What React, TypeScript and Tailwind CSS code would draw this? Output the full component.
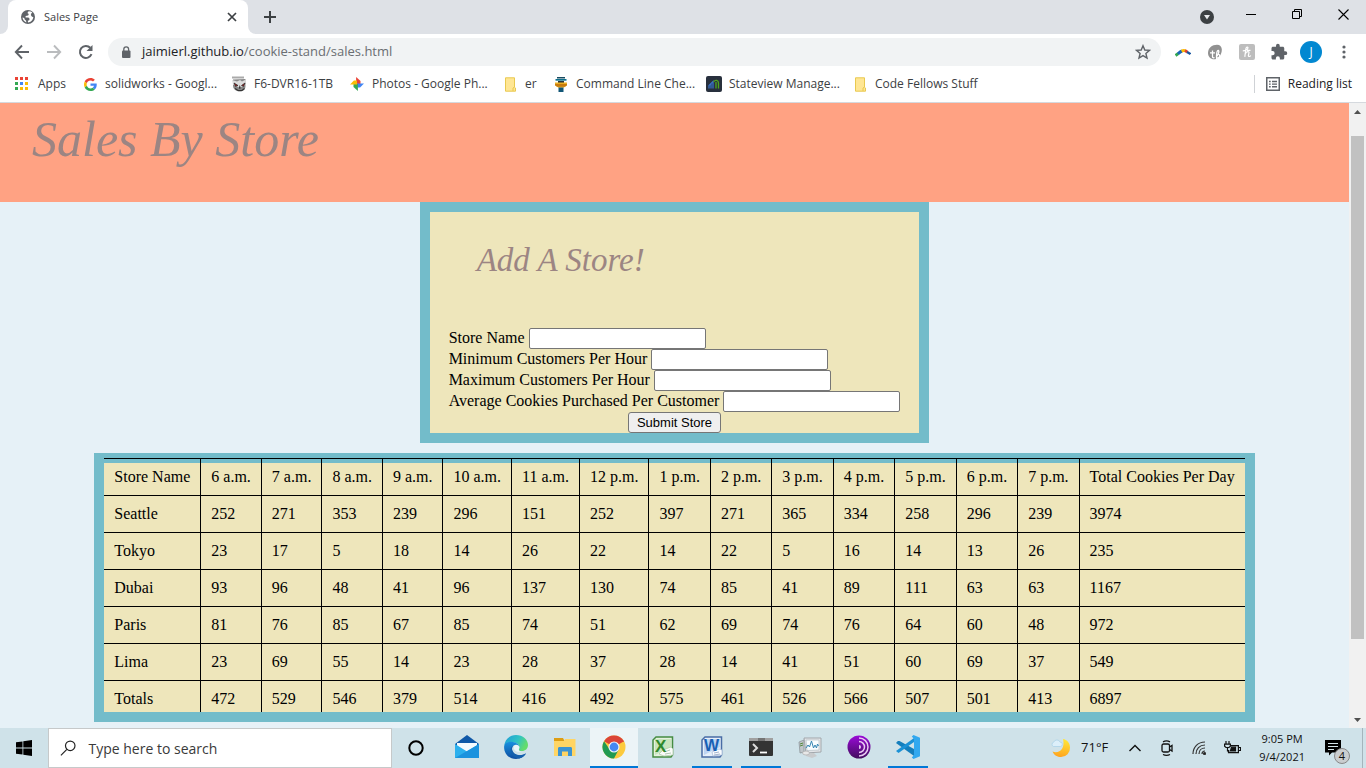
import React from "react";

const HOURS = ["6 a.m.", "7 a.m.", "8 a.m.", "9 a.m.", "10 a.m.", "11 a.m.", "12 p.m.", "1 p.m.", "2 p.m.", "3 p.m.", "4 p.m.", "5 p.m.", "6 p.m.", "7 p.m."];

const STORES: { name: string; sales: number[]; total: number }[] = [
  { name: "Seattle", sales: [252, 271, 353, 239, 296, 151, 252, 397, 271, 365, 334, 258, 296, 239], total: 3974 },
  { name: "Tokyo", sales: [23, 17, 5, 18, 14, 26, 22, 14, 22, 5, 16, 14, 13, 26], total: 235 },
  { name: "Dubai", sales: [93, 96, 48, 41, 96, 137, 130, 74, 85, 41, 89, 111, 63, 63], total: 1167 },
  { name: "Paris", sales: [81, 76, 85, 67, 85, 74, 51, 62, 69, 74, 76, 64, 60, 48], total: 972 },
  { name: "Lima", sales: [23, 69, 55, 14, 23, 28, 37, 28, 14, 41, 51, 60, 69, 37], total: 549 },
];

const TOTALS = { name: "Totals", sales: [472, 529, 546, 379, 514, 416, 492, 575, 461, 526, 566, 507, 501, 413], total: 6897 };

const FIELDS = [
  { id: "store-name", label: "Store Name" },
  { id: "min-customers", label: "Minimum Customers Per Hour" },
  { id: "max-customers", label: "Maximum Customers Per Hour" },
  { id: "avg-cookies", label: "Average Cookies Purchased Per Customer" },
];

/* ---------- Browser icons ---------- */

const GlobeIcon = () => (
  <svg width="16" height="16" viewBox="0 0 16 16">
    <circle cx="8" cy="8" r="7" fill="#5f6368" />
    <path d="M8.6 2.2 7.4 4l1.4 1-.6 1.6-2.6.4v1.4h2.8l1.2 1.4-.3 1.4-1.5.6.2 1.8c2.800-.4 5.200-2.800 5.300-5.600l-1.300-.2-1.200-1.800.6-1.800 1-.6A5.600 5.600 0 0 0 8.600 2.200zM2.500 8.600c.2 2.200 1.700 4.100 3.800 4.900l-.2-1.800-1.600-1.500-.2-1.200z" fill="#fff" />
  </svg>
);

const CloseIcon = () => (
  <svg width="10" height="10" viewBox="0 0 10 10" stroke="#3c4043" strokeWidth="1.7">
    <path d="M1 1l8 8M9 1l-8 8" />
  </svg>
);

const PlusIcon = () => (
  <svg width="12" height="12" viewBox="0 0 12 12" stroke="#3c4043" strokeWidth="2">
    <path d="M6 0v12M0 6h12" />
  </svg>
);

const TabSearchIcon = () => (
  <svg width="14" height="14" viewBox="0 0 14 14">
    <circle cx="7" cy="7" r="7" fill="#3c4043" />
    <path d="M4 5h6l-3 4.500z" fill="#e8eaed" />
  </svg>
);

const MinimizeIcon = () => (
  <svg width="10" height="10" viewBox="0 0 10 10">
    <path d="M0 5.500h10" stroke="#000" />
  </svg>
);

const RestoreIcon = () => (
  <svg width="10" height="10" viewBox="0 0 10 10" fill="none" stroke="#000">
    <path d="M.5 2.500h7v7h-7zM2.500 2.500v-2h7v7h-2" />
  </svg>
);

const WindowCloseIcon = () => (
  <svg width="11" height="11" viewBox="0 0 11 11" stroke="#000" strokeWidth="1.100">
    <path d="M.5.5l10 10M10.500.5l-10 10" />
  </svg>
);

const ArrowIcon = ({ color, forward }: { color: string; forward?: boolean }) => (
  <svg width="16" height="16" viewBox="0 0 16 16" fill="none" stroke={color} strokeWidth="1.900">
    {forward ? <path d="M1 8h13M8 1.500 14.200 8 8 14.500" /> : <path d="M15 8H2M8 1.500 1.800 8 8 14.500" />}
  </svg>
);

const ReloadIcon = () => (
  <svg width="16" height="16" viewBox="0 0 16 16">
    <path d="M13.500 10.200A6 6 0 1 1 12.300 3.800" fill="none" stroke="#5f6368" strokeWidth="2" />
    <path d="M14.500 1v6h-6z" fill="#5f6368" />
  </svg>
);

const LockIcon = () => (
  <svg width="10" height="13" viewBox="0 0 10 13">
    <rect x="1" y="4.500" width="8.500" height="7.500" rx="1" fill="#5f6368" />
    <path d="M2.800 5V3.200a2.400 2.400 0 0 1 4.800 0V5" fill="none" stroke="#5f6368" strokeWidth="1.300" />
  </svg>
);

const StarIcon = () => (
  <svg width="16" height="16" viewBox="0 0 16 16" fill="none" stroke="#5f6368" strokeWidth="1.400">
    <path d="M8 1.700l1.800 4.300 4.700.4-3.600 3.100 1.100 4.600L8 11.600l-4 2.500 1.100-4.600L1.500 6.400l4.700-.4z" />
  </svg>
);

const ArcIcon = () => (
  <svg width="16" height="16" viewBox="0 0 16 16" fill="none" strokeWidth="3">
    <path d="M.5 11.500l2.800-2" stroke="#34a853" />
    <path d="M3 9.800C4.500 8.500 5.500 7.600 7 7" stroke="#1a66b8" />
    <path d="M6.600 7.100c1.600-.7 2.800-.7 3.800-.2" stroke="#fbbc05" />
    <path d="M10 6.500c1 .5 1.700 1 2.400 1.800" stroke="#e0402f" />
    <path d="M12 8l3.500 2" stroke="#1a56a0" strokeWidth="2.400" />
  </svg>
);

const LeafIcon = () => (
  <svg width="16" height="16" viewBox="0 0 16 16">
    <path d="M1 9C1 4 5 .8 10 .8c3 0 4.600 1.800 4.800 4.500.2 4-2 8.800-6.500 9.900C4 15.800 1 13 1 9z" fill="#919191" />
    <path d="M5.500 6.500v6c0 1.300 1 1.600 2 1M3 8.800h5M9.600 12.500c2-2.500 3-6 1.600-6-1.500 0-2 5-1.600 9M10 11c2.500-1.500 3.200.5 2.300 2-.5 1-1.500 1-2.100.6" fill="none" stroke="#fff" strokeWidth="1.300" />
  </svg>
);

const HoneyIcon = () => (
  <svg width="16" height="16" viewBox="0 0 16 16">
    <rect width="16" height="16" rx="2" fill="#bdbdbd" />
    <path d="M3.800 6.800C6 6.800 9 5.500 9 3.800 9 2.600 7.200 2.800 6.900 4.500L5.800 12.800M6.300 9.800C7.500 7.200 10.600 6.800 9.900 9L9.400 11.300C9.200 12.800 10.800 12.900 11.800 11.500M8 6.300h3.500" fill="none" stroke="#fff" strokeWidth="1.200" />
  </svg>
);

const PuzzleIcon = () => (
  <svg width="18" height="18" viewBox="0 0 24 24" fill="#5f6368">
    <path d="M20.500 11H19V7c0-1.100-.9-2-2-2h-4V3.500a2.500 2.500 0 0 0-5 0V5H4c-1.100 0-2 .9-2 2v3.800h1.500a2.700 2.700 0 0 1 0 5.400H2V20c0 1.100.9 2 2 2h3.800v-1.500a2.700 2.700 0 0 1 5.400 0V22H17c1.100 0 2-.9 2-2v-4h1.500a2.500 2.500 0 0 0 0-5z" />
  </svg>
);

const DotsIcon = () => (
  <svg width="4" height="14" viewBox="0 0 4 14" fill="#5f6368">
    <circle cx="2" cy="2" r="1.600" /><circle cx="2" cy="7" r="1.600" /><circle cx="2" cy="12" r="1.600" />
  </svg>
);

const AppsIcon = () => {
  const colors = ["#ea4335", "#ea4335", "#ea4335", "#34a853", "#4285f4", "#fbbc05", "#34a853", "#fbbc05", "#fbbc05"];
  return (
    <svg width="16" height="16" viewBox="0 0 16 16">
      {colors.map((c, i) => <rect key={i} x={(i % 3) * 5} y={1 + Math.floor(i / 3) * 5} width="3" height="3" fill={c} />)}
    </svg>
  );
};

const GoogleIcon = () => (
  <svg width="13" height="13" viewBox="0 0 48 48">
    <path fill="#EA4335" d="M24 9.500c3.540 0 6.710 1.220 9.210 3.600l6.850-6.850C35.900 2.380 30.470 0 24 0 14.620 0 6.510 5.380 2.560 13.220l7.980 6.190C12.430 13.720 17.740 9.500 24 9.500z" />
    <path fill="#4285F4" d="M46.980 24.550c0-1.570-.15-3.090-.38-4.550H24v9.020h12.940c-.58 2.960-2.260 5.480-4.780 7.180l7.730 6c4.510-4.180 7.090-10.360 7.090-17.650z" />
    <path fill="#FBBC05" d="M10.530 28.590A14.500 14.500 0 0 1 9.770 24c0-1.600.27-3.140.76-4.590l-7.980-6.190A23.900 23.900 0 0 0 0 24c0 3.880.92 7.540 2.560 10.780z" />
    <path fill="#34A853" d="M24 48c6.480 0 11.930-2.130 15.890-5.810l-7.730-6c-2.150 1.450-4.920 2.300-8.160 2.300-6.260 0-11.570-4.220-13.470-9.910l-7.980 6.190C6.510 42.620 14.620 48 24 48z" />
  </svg>
);

const OwlIcon = () => (
  <svg width="16" height="16" viewBox="0 0 16 16">
    <path d="M1 .5h12v2H1z" fill="#aaa" />
    <path d="M2 3.500 14.500 3v7c0 3-2 5.500-5.500 5.500-4 0-7-2.500-7-6z" fill="#888" />
    <path d="M1 4l5 1.500L9 4l2 1.500 4-2-1 6-3 1-2 1.500-3-1.500-4-2z" fill="#ddd" />
    <path d="M3 7l4 2.500-2.500.8zM14 7l-3.500 2.500 2.200.8z" fill="#a81c1c" stroke="#222" strokeWidth=".7" />
    <path d="M8.800 9l1 3-1 1-1-1z" fill="#333" />
    <path d="M4 12.500l3 2h4l2.500-2" fill="none" stroke="#333" strokeWidth="1.200" />
  </svg>
);

const PhotosIcon = () => (
  <svg width="14" height="14" viewBox="0 0 16 16">
    <path d="M7 0l5 4.500V8H7z" fill="#ea4335" />
    <path d="M16 7.500 11.500 12H8V7.500z" fill="#4285f4" />
    <path d="M9 16 4 11.500V8h5z" fill="#34a853" />
    <path d="M0 8.500 4.500 4H8v4.500z" fill="#fbbc05" />
  </svg>
);

const FolderIcon = () => (
  <svg width="13" height="15" viewBox="0 0 13 15">
    <path d="M1.500.8h9v9.400l1 .8v3.200H1.500z" fill="#ffe694" stroke="#e9c94f" />
    <path d="M9 14v-3l1.500-1" fill="none" stroke="#e9c94f" />
  </svg>
);

const TowerIcon = () => (
  <svg width="14" height="17" viewBox="0 0 14 17">
    <path d="M3 1h8v1.500H3z" fill="#184b60" /><path d="M1.500 3h11v1.700h-11z" fill="#0e718d" />
    <path d="M4 5h6v2H4z" fill="#25343b" /><path d="M1 6.500h12v2.800l-3.500 2.500h-5L1 9.300z" fill="#edaf21" />
    <path d="M1 8h12v1.300l-2 1.400H3L1 9.300z" fill="#c77c10" /><path d="M4.500 11.500h5V16h-5z" fill="#125777" />
  </svg>
);

const StateviewIcon = () => (
  <svg width="16" height="18" viewBox="0 0 16 18">
    <rect y="1" width="16" height="16" rx="2" fill="#28303d" />
    <path d="M3 13.500v-3l4-4v7M5 9v4.500" fill="none" stroke="#3970c4" strokeWidth="1.300" />
    <path d="M7.500 7c2-3 5-1.600 5 1v5.500M10 7v6.500" fill="none" stroke="#4fa51d" strokeWidth="1.300" />
  </svg>
);

const ReadingListIcon = () => (
  <svg width="14" height="14" viewBox="0 0 14 14" fill="none" stroke="#5f6368">
    <rect x=".75" y=".75" width="12.500" height="12.500" strokeWidth="1.500" />
    <path d="M3 4.500h1.700M3 7.100h1.700M3 9.700h1.700M6 4.500h5M6 7.100h5M6 9.700h5" strokeWidth="1.400" />
  </svg>
);

/* ---------- Taskbar icons ---------- */

const WindowsIcon = () => (
  <svg width="16" height="16" viewBox="0 0 16 16">
    <path d="M0 2.300 6.500 1.400v6.200H0zM7.300 1.300 16 0v7.600H7.300zM0 8.400h6.500v6.200L0 13.700zM7.300 8.400H16V16l-8.700-1.300z" />
  </svg>
);

const SearchIcon = () => (
  <svg width="18" height="18" viewBox="0 0 18 18" fill="none" stroke="#222" strokeWidth="1.300">
    <circle cx="11.200" cy="6.600" r="5.200" /><path d="M7.500 10.500 1 17" />
  </svg>
);

const CortanaIcon = () => (
  <svg width="16" height="16" viewBox="0 0 16 16"><circle cx="8" cy="8" r="6.700" fill="none" stroke="#000" strokeWidth="2" /></svg>
);

const MailIcon = () => (
  <svg width="24" height="24" viewBox="0 0 24 24">
    <path d="M0 9 12 0l12 9v3H0z" fill="#0f58a8" /><path d="M2 8h20v5l-10 6-10-6z" fill="#f5fafe" />
    <path d="M0 9l12 7.500L24 9v14H0z" fill="#2cb0ed" /><path d="M0 23 24 9v14z" fill="#1b93de" />
  </svg>
);

const EdgeIcon = () => (
  <svg width="24" height="24" viewBox="0 0 24 24">
    <defs>
      <linearGradient id="edge-a" x1="0" y1="0" x2="1" y2="0.400"><stop offset="0" stopColor="#1f9bd8" /><stop offset="0.600" stopColor="#2fc3c5" /><stop offset="1" stopColor="#64dc6c" /></linearGradient>
      <linearGradient id="edge-b" x1="0" y1="0" x2="0" y2="1"><stop offset="0" stopColor="#1890df" /><stop offset="1" stopColor="#0f4d9f" /></linearGradient>
    </defs>
    <path d="M.2 11C.8 4.500 5.700 0 12 0c7 0 12 4.800 12 10 0 3.700-2.800 6-6 6-2.400 0-3.600-.8-3.300-1.600.6-.9 1-1.800.6-3C14.500 8.500 11 7 7.500 7 4.300 7 1.500 8.500.2 11z" fill="url(#edge-a)" />
    <path d="M.1 12C.2 8.600 3.500 6.500 7.500 6.800c4 .2 7 2 7.500 4.600-.8-1-2-1.700-3.400-1.600-2.300.2-3.800 2.200-3.600 4.600.3 3.500 3.500 6 8 5.800 2.200 0 4-.7 6-1.900C20 21.800 16.500 24 12 24 5 24 0 18.500.1 12z" fill="url(#edge-b)" />
    <path d="M9.500 10.500c-3.800 1.800-3.800 6.800-1 9.800 1.600 1.800 4.200 3 6.800 3.200 2.900-.7 5.300-2.500 6.700-5-6 3.500-12.500 1.200-13.800-3.400-.4-1.800.1-3.500 1.300-4.600z" fill="#1560ad" />
    <path d="M11 10.200c2.400-1 5 1 4.200 3.300-.8 1.600-.5 2.500 1.800 3.100-3.300.9-6.700-.8-7.200-3.200-.2-1.400.2-2.500 1.200-3.200z" fill="#e9f6fa" />
  </svg>
);

const ExplorerIcon = () => (
  <svg width="22" height="20" viewBox="0 0 22 20">
    <path d="M0 1h9l1.500 3H0z" fill="#dd9d13" /><path d="M0 4h10l1-2h10.500v17H0z" fill="#ffd564" />
    <path d="M4 19v-7.500C4 10.700 4.500 10 5.500 10h11c1 0 1.500.7 1.500 1.500V19h-4v-4.500H8V19z" fill="#3c94d2" />
  </svg>
);

const ChromeIcon = () => (
  <svg width="24" height="24" viewBox="0 0 24 24">
    <circle cx="12" cy="12" r="11.500" fill="#fcca3e" />
    <path d="M12 12 2.040 6.250A11.500 11.500 0 0 1 21.960 6.250z" fill="#db4437" />
    <path d="M12 6.700h10.200a11.500 11.500 0 0 0-.24-.45H12z" fill="#db4437" />
    <path d="M2.040 6.250A11.500 11.500 0 0 0 12 23.500l4.600-8.800L12 12l-5 1.500z" fill="#219a52" />
    <circle cx="12" cy="12" r="5.500" fill="#f1f6f8" /><circle cx="12" cy="12" r="4.400" fill="#4688f1" />
  </svg>
);

const ExcelIcon = () => (
  <svg width="22" height="22" viewBox="0 0 22 22">
    <path d="M4 1h16.500v18L19 21H1V4z" fill="#e5f2df" stroke="#458c42" strokeWidth="1.500" />
    <path d="M3 3h16v8L3 19z" fill="#c8e5bd" />
    <path d="M11 14l8-3 2 2v6l-9 1-5-2z" fill="#fafcf9" stroke="#a8c4a2" strokeWidth=".7" /><path d="M12 16l6-2M13 18l6-1" stroke="#91af91" strokeWidth=".7" />
    <text x="3" y="16" fontFamily="Liberation Sans, sans-serif" fontWeight="700" fontSize="17" fill="#2f892d">X</text>
  </svg>
);

const WordIcon = () => (
  <svg width="22" height="22" viewBox="0 0 22 22">
    <path d="M4 1h16.500v18L19 21H1V4z" fill="#e6effa" stroke="#496ca5" strokeWidth="1.500" />
    <path d="M3 3h16v8L3 19z" fill="#bdd4f2" />
    <path d="M11 16l7-3 3 1v5l-9 1z" fill="#fafcff" stroke="#a5b9d8" strokeWidth=".7" /><path d="M13 17l5-1M13 19l6-1" stroke="#8197b9" strokeWidth=".7" />
    <text x="3" y="15" fontFamily="Liberation Sans, sans-serif" fontWeight="700" fontSize="16" fill="#175fb4">W</text>
  </svg>
);

const TerminalIcon = () => (
  <svg width="24" height="18" viewBox="0 0 24 18">
    <rect width="24" height="18" rx="1" fill="#343434" /><path d="M0 0h24v3H0z" fill="#a0a0a0" /><path d="M9 0h7v3H9z" fill="#757575" />
    <path d="M4 6l4 4-4 4" fill="none" stroke="#ddd" strokeWidth="2" /><path d="M11 14.500h7" stroke="#fff" strokeWidth="1.800" />
  </svg>
);

const MonitorIcon = () => (
  <svg width="24" height="22" viewBox="0 0 24 22">
    <path d="M1 6l5-2v12l-4 1z" fill="#c0c6ca" stroke="#868e92" strokeWidth=".7" /><path d="M2 8l3-1M2 10l3-1" stroke="#55883c" />
    <path d="M6 2h17v14l-15 1z" fill="#e3e5e8" stroke="#a2a7ab" /><path d="M8 4h13v10l-12 .5z" fill="#fafdff" stroke="#b5bec4" strokeWidth=".7" />
    <path d="M8 12l2-3 1.500 2 2-6 2 7 1.500-3 1.500 3 1-4 1 2" fill="none" stroke="#3585b2" />
    <path d="M9 17h7l3 3-5 2-6-2z" fill="#c9cbcd" /><ellipse cx="8" cy="17" rx="3.500" ry="2" fill="#e8e8e8" stroke="#aaa" strokeWidth=".7" />
  </svg>
);

const TorIcon = () => (
  <svg width="24" height="24" viewBox="0 0 24 24">
    <defs><linearGradient id="tor" x1="0" y1="0" x2="0" y2="1"><stop offset="0" stopColor="#9a0bd8" /><stop offset="1" stopColor="#420c5d" /></linearGradient></defs>
    <circle cx="12" cy="12" r="11.500" fill="url(#tor)" />
    <path d="M12 3a9 9 0 0 1 0 18M12 6.500a5.500 5.500 0 0 1 0 11" fill="none" stroke="#e8c9f2" strokeWidth="1.500" /><path d="M12 10a2 2 0 0 1 0 4z" fill="#e8c9f2" />
  </svg>
);

const CodeIcon = () => (
  <svg width="24" height="24" viewBox="0 0 24 24">
    <path d="M2 6 18 19v-5L3.500 6 0 8z" fill="#147ebc" />
    <path d="M0 8l2.500-2L18 17v4z" fill="#147ebc" />
    <path d="M0 16l2.500 2L18 7V3z" fill="#1b91d6" />
    <path d="M17.500 0 24 2.800v18.400L17.500 24l-1.700-1.600L18 20V4l-2.200-2.400z" fill="#32a8ef" />
  </svg>
);

const MoonIcon = () => (
  <svg width="20" height="20" viewBox="0 0 20 20">
    <defs><linearGradient id="moon" x1="0.600" y1="0" x2="0.400" y2="1"><stop offset="0" stopColor="#ffe63a" /><stop offset="1" stopColor="#ffa31d" /></linearGradient></defs>
    <path d="M12 1c4 .6 7 4 7 8.500a9 9 0 0 1-9 9.500c-3.500 0-7-1.600-8.500-5.500C8 16 14.500 11 12 1z" fill="url(#moon)" />
    <path d="M2.500 8.500a2.300 2.300 0 0 1 .3-4.400 3.300 3.300 0 0 1 6.200 0 2.200 2.200 0 0 1 .3 4.400z" fill="#dceffa" stroke="#a6d0e7" strokeWidth=".7" />
  </svg>
);

const ChevronUpIcon = () => (
  <svg width="14" height="8" viewBox="0 0 14 8"><path d="M1.500 7 7 1.500 12.500 7" fill="none" stroke="#111" strokeWidth="1.400" /></svg>
);

const MeetIcon = () => (
  <svg width="14" height="16" viewBox="0 0 14 16" fill="none" stroke="#111" strokeWidth="1.300">
    <rect x="2" y="4" width="7.500" height="8" rx="1.500" /><path d="M9.500 7l2.500-1.500v5.500L9.500 9.500M3 1.800Q6.500 0 10 1.800M3 14.500q3.500 1.600 7 0" />
  </svg>
);

const WifiIcon = () => (
  <svg width="14" height="14" viewBox="0 0 14 14" fill="none" stroke="#333" strokeWidth="1.200">
    <path d="M1 13C1 6 6 1 13 1M4 13c0-5 3.500-9 9-9M7 13c0-3.500 2.500-6 6-6M10 13c0-2 1-3 3-3" /><circle cx="12.500" cy="12.500" r="1" fill="#111" />
  </svg>
);

const BatteryIcon = () => (
  <svg width="17" height="14" viewBox="0 0 17 14" fill="none" stroke="#111" strokeWidth="1.200">
    <path d="M7 4.600h7.400v7H4.500V9M14.800 6.500h1.700v3h-1.700" /><path d="M7.500 6.200h4v3.800h-5z" fill="#111" />
    <path d="M2 0v3M5 0v3M.6 3.200h5.800v2L5 6.500H2L.6 5.200zM3.500 6.500V10h2" />
  </svg>
);

const ActionCenterIcon = () => (
  <svg width="17" height="16" viewBox="0 0 17 16">
    <path d="M0 0h16v12.500H7L4 15.500v-3H0z" fill="#000" /><path d="M3 3.500h10M3 6.500h10M3 9.500h6" stroke="#d4e4e9" />
  </svg>
);

/* ---------- Browser chrome ---------- */

const BOOKMARKS: { label: string; icon: React.ReactNode; width: string }[] = [
  { label: "Apps", icon: <AppsIcon />, width: "w-[67px]" },
  { label: "solidworks - Googl...", icon: <GoogleIcon />, width: "w-[149px]" },
  { label: "F6-DVR16-1TB", icon: <OwlIcon />, width: "w-[118px]" },
  { label: "Photos - Google Ph...", icon: <PhotosIcon />, width: "w-[153px]" },
  { label: "er", icon: <FolderIcon />, width: "w-[51px]" },
  { label: "Command Line Che...", icon: <TowerIcon />, width: "w-[153px]" },
  { label: "Stateview Manage...", icon: <StateviewIcon />, width: "w-[146px]" },
  { label: "Code Fellows Stuff", icon: <FolderIcon />, width: "w-[130px]" },
];

function TabStrip() {
  return (
    <div className="flex h-[34px] items-stretch bg-[#dee1e6]">
      <div className="flex w-2 bg-white"><div className="w-2 rounded-br-lg bg-[#dee1e6]" /></div>
      <div className="flex w-60 items-center rounded-t-lg bg-white pl-3 pr-[11px]">
        <GlobeIcon />
        <span className="ml-2 flex-1 text-[11px] text-[#3c4043]">Sales Page</span>
        <button aria-label="Close tab"><CloseIcon /></button>
      </div>
      <div className="flex w-2 bg-white"><div className="w-2 rounded-bl-lg bg-[#dee1e6]" /></div>
      <button aria-label="New tab" className="px-2"><PlusIcon /></button>
      <div className="ml-auto flex items-center pr-[17px]">
        <button aria-label="Search tabs" className="mr-[32px]"><TabSearchIcon /></button>
        <div className="mb-[6px] flex items-center gap-9">
          <button aria-label="Minimize"><MinimizeIcon /></button>
          <button aria-label="Restore"><RestoreIcon /></button>
          <button aria-label="Close window"><WindowCloseIcon /></button>
        </div>
      </div>
    </div>
  );
}

function Toolbar() {
  return (
    <div className="flex h-9 items-center bg-white pl-[14px] pr-5">
      <div className="flex items-center gap-4">
        <button aria-label="Back"><ArrowIcon color="#5f6368" /></button>
        <button aria-label="Forward"><ArrowIcon color="#babcbe" forward /></button>
        <button aria-label="Reload"><ReloadIcon /></button>
      </div>
      <div className="ml-[14px] flex h-7 flex-1 items-center rounded-full bg-[#f1f3f4] pl-[13px] pr-[10px]">
        <LockIcon />
        <span className="ml-[11px] flex-1 text-[13px] text-[#6a6e72]"><span className="text-[#202124]">jaimierl.github.io</span>/cookie-stand/sales.html</span>
        <button aria-label="Bookmark this page"><StarIcon /></button>
      </div>
      <div className="ml-[14px] flex items-center gap-4">
        <button aria-label="Arc extension"><ArcIcon /></button>
        <button aria-label="Leaf extension"><LeafIcon /></button>
        <button aria-label="Coupons extension"><HoneyIcon /></button>
        <button aria-label="Extensions" className="-ml-px"><PuzzleIcon /></button>
      </div>
      <button className="ml-3 size-[22px] rounded-full bg-[#0288d1] text-xs text-white">J</button>
      <button aria-label="Menu" className="ml-5"><DotsIcon /></button>
    </div>
  );
}

function BookmarksBar() {
  return (
    <nav className="flex h-[33px] items-center border-b border-[#d5d9de] bg-white pb-1 pl-[15px] pr-[14px] text-[12px] text-[#3c4043]">
      {BOOKMARKS.map((b) => (
        <a key={b.label} href="#" className={`flex shrink-0 items-center gap-[7px] whitespace-nowrap ${b.width}`}>
          <span className="flex w-4 justify-center">{b.icon}</span>
          {b.label}
        </a>
      ))}
      <button className="ml-auto flex items-center gap-2 border-l border-[#cfd2d6] pl-[11px] text-[#202124]">
        <ReadingListIcon />
        Reading list
      </button>
    </nav>
  );
}

function Scrollbar() {
  return (
    <div className="flex w-[17px] shrink-0 flex-col bg-[#f1f1f1]">
      <svg width="17" height="17" viewBox="0 0 17 17"><path d="M5 11h7L8.500 7z" fill="#505050" /></svg>
      <div className="flex flex-1 flex-col items-center">
        <div className="grow-[16]" />
        <div className="w-[13px] grow-[503] bg-[#c1c1c1]" />
        <div className="grow-[72]" />
      </div>
      <svg width="17" height="17" viewBox="0 0 17 17"><path d="M5 7h7l-3.500 4z" fill="#505050" /></svg>
    </div>
  );
}

/* ---------- Page ---------- */

function StoreForm() {
  return (
    <form className="border-10 border-[#73bcca] bg-[#eee6bb] px-[19px] pt-6" onSubmit={(e) => e.preventDefault()}>
      <h2 className="mb-11 ml-7 font-['Liberation_Serif',serif] text-[33px] leading-[48px] italic text-[#9c8583]">Add A Store!</h2>
      {FIELDS.map((f) => (
        <div key={f.id} className="flex h-[21px] items-start gap-1">
          <label htmlFor={f.id} className="leading-5">{f.label}</label>
          <input id={f.id} type="text" className="h-[21px] w-[177px] rounded-xs border border-[#767676] bg-white px-1 text-[13px]" />
        </div>
      ))}
      <div className="flex justify-center">
        <button type="submit" className="h-[21px] rounded-[3px] border border-[#767676] bg-[#efefef] px-2 font-['Liberation_Sans',sans-serif] text-[13px] leading-[19px]">Submit Store</button>
      </div>
    </form>
  );
}

function SalesTable() {
  return (
    <div className="mt-[10px] border-x-10 border-t-5 border-b-10 border-[#73bcca] bg-[#eee6bb]">
      <table className="border-separate border-spacing-0 whitespace-nowrap text-left">
        <thead>
          <tr>
            {["Store Name", ...HOURS, "Total Cookies Per Day"].map((h) => (
              <th key={h} scope="col" className="border-t border-l border-black p-0 font-normal first:border-l-0">
                <div className="border-t-4 border-[#73bcca] px-[10px] pt-[5px] pb-[9px] leading-[18px]">{h}</div>
              </th>
            ))}
          </tr>
        </thead>
        <tbody>
          {STORES.map((s) => (
            <tr key={s.name}>
              {[s.name, ...s.sales, s.total].map((v, i) => (
                <td key={i} className="border-t border-l border-black px-[10px] py-[9px] leading-[18px] first:border-l-0">{v}</td>
              ))}
            </tr>
          ))}
        </tbody>
        <tfoot>
          <tr>
            {[TOTALS.name, ...TOTALS.sales, TOTALS.total].map((v, i) => (
              <td key={i} className="border-t border-l border-black px-[10px] pt-[9px] pb-1 leading-[18px] first:border-l-0">{v}</td>
            ))}
          </tr>
        </tfoot>
      </table>
    </div>
  );
}

/* ---------- Taskbar ---------- */

const TASKS: { name: string; icon: React.ReactNode; open?: boolean }[] = [
  { name: "Mail", icon: <MailIcon /> },
  { name: "Edge", icon: <EdgeIcon /> },
  { name: "File Explorer", icon: <ExplorerIcon /> },
  { name: "Chrome", icon: <ChromeIcon />, open: true },
  { name: "Excel", icon: <ExcelIcon /> },
  { name: "Word", icon: <WordIcon />, open: true },
  { name: "Terminal", icon: <TerminalIcon />, open: true },
  { name: "Resource Monitor", icon: <MonitorIcon /> },
  { name: "Tor Browser", icon: <TorIcon /> },
  { name: "VS Code", icon: <CodeIcon />, open: true },
];

function Taskbar() {
  return (
    <footer className="flex h-10 items-stretch bg-[#cfe2e9] text-[#111]">
      <button aria-label="Start" className="flex w-12 items-center justify-center"><WindowsIcon /></button>
      <label className="flex w-[344px] items-center gap-3 border border-[#c6c9ca] bg-white pl-[11px]">
        <SearchIcon />
        <input type="text" aria-label="Search" placeholder="Type here to search" className="w-full bg-transparent text-[14px] outline-none placeholder:text-[#3a3a3a]" />
      </label>
      <button aria-label="Cortana" className="flex w-[50px] items-center justify-center pr-[2px]"><CortanaIcon /></button>
      {TASKS.map((t) => (
        <button key={t.name} aria-label={t.name} className="flex w-[49px] justify-center">
          <span
            className={
              t.name === "Chrome"
                ? "flex h-10 w-12 items-center justify-center border-b-2 border-[#0078d7] bg-[#ecf4f7]"
                : t.open
                  ? "flex h-10 w-10 items-center justify-center border-b-2 border-[#0078d7]"
                  : "flex h-10 w-10 items-center justify-center border-b-2 border-transparent"
            }
          >
            {t.icon}
          </span>
        </button>
      ))}
      <div className="ml-auto flex items-center">
        <button className="flex items-center gap-[10px] text-[13px]"><MoonIcon />71°F</button>
        <div className="ml-5 flex items-center gap-[18px]">
          <button aria-label="Show hidden icons"><ChevronUpIcon /></button>
          <button aria-label="Meet now"><MeetIcon /></button>
          <button aria-label="Network"><WifiIcon /></button>
          <button aria-label="Battery"><BatteryIcon /></button>
        </div>
        <div className="ml-[18px] text-center text-[11px] leading-[18px]">
          <div>9:05 PM</div>
          <div>9/4/2021</div>
        </div>
        <button aria-label="Notifications" className="relative ml-5 mr-5">
          <ActionCenterIcon />
          <span className="absolute -right-2 -bottom-2 flex size-4 items-center justify-center rounded-full border border-[#888] bg-[#cacdcf] text-[11px]">4</span>
        </button>
        <div className="h-10 w-1 border-l border-[#a5b5bc]" />
      </div>
    </footer>
  );
}

export default function App() {
  return (
    <div className="flex min-h-screen flex-col font-['Open_Sans',sans-serif]">
      <header>
        <TabStrip />
        <Toolbar />
        <BookmarksBar />
      </header>
      <div className="flex flex-1">
        <main className="flex flex-1 flex-col bg-[#e6f1f7] font-['Liberation_Serif',serif] text-base leading-[18px] text-black">
          <header className="bg-[#ffa283] pt-1 pb-[31px] pl-8">
            <h1 className="text-[50px] leading-[64px] italic text-[#9c8583]">Sales By Store</h1>
          </header>
          <div className="flex flex-col items-center pb-[6px]">
            <StoreForm />
            <SalesTable />
          </div>
        </main>
        <Scrollbar />
      </div>
      <Taskbar />
    </div>
  );
}
